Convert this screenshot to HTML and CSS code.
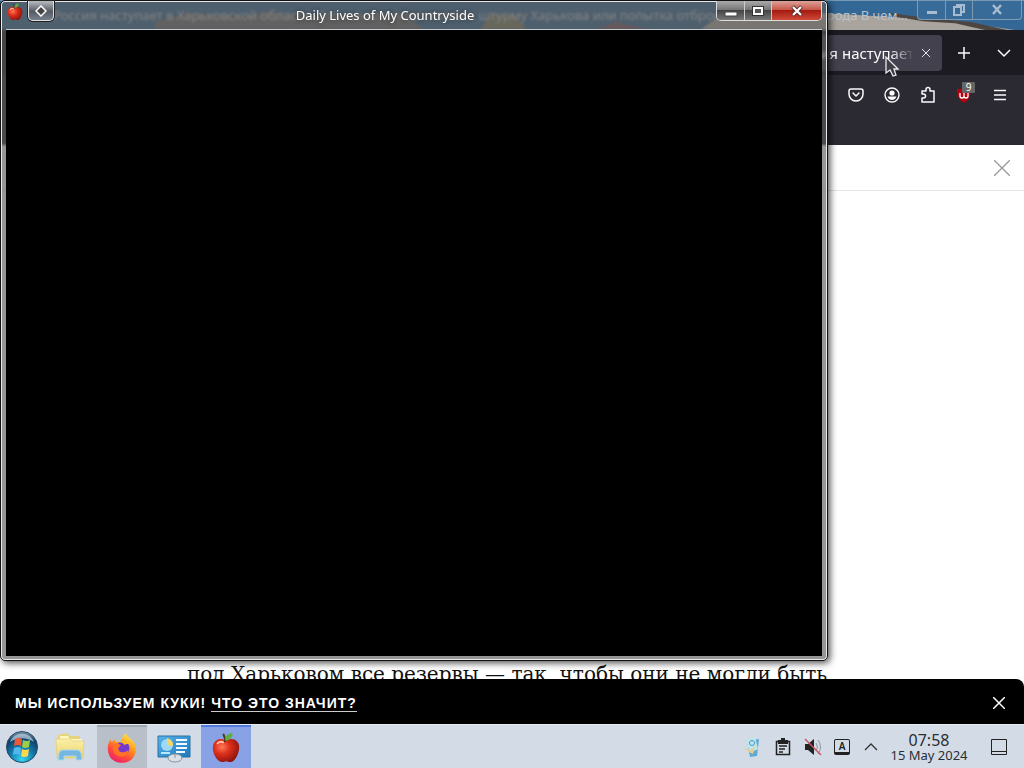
FILE: index.html
```html
<!DOCTYPE html>
<html lang="ru">
<head>
<meta charset="utf-8">
<title>Desktop</title>
<link rel="stylesheet" href="styles.css">
</head>
<body>
<svg class="defs" aria-hidden="true">
  <defs>
    <radialGradient id="redApple" cx=".35" cy=".35" r=".75"><stop offset="0" stop-color="#ff7a55"/><stop offset=".4" stop-color="#dc2f1c"/><stop offset="1" stop-color="#84100b"/></radialGradient>
    <radialGradient id="orb" cx=".5" cy=".9" r=".9"><stop offset="0" stop-color="#35d5f0"/><stop offset=".45" stop-color="#1179ab"/><stop offset=".8" stop-color="#0e3d63"/><stop offset="1" stop-color="#8aa4b8"/></radialGradient>
    <linearGradient id="fox" x1=".8" y1="0" x2=".25" y2="1"><stop offset="0" stop-color="#fff04a"/><stop offset=".4" stop-color="#ff9a1f"/><stop offset=".7" stop-color="#ff4a3c"/><stop offset="1" stop-color="#e91f70"/></linearGradient>
    <linearGradient id="folder" x1="0" y1="0" x2="0" y2="1"><stop offset="0" stop-color="#fbf0a8"/><stop offset="1" stop-color="#ecd36c"/></linearGradient>
    <linearGradient id="panel" x1="0" y1="0" x2="1" y2="1"><stop offset="0" stop-color="#58b4e8"/><stop offset="1" stop-color="#1d79bd"/></linearGradient>
    <symbol id="apple" viewBox="0 0 32 34">
      <path d="M15 9C9 5 2 9 2 17c0 8 6 15 10 15 2 0 3-1 4-1s3 1 5 1c4 0 9-8 9-16 0-7-7-11-15-7z" fill="url(#redApple)"/>
      <path d="M15 11c0-4 0-6-2-9" stroke="#4d3b1c" stroke-width="2" fill="none"/>
      <path d="M15 9c0-5 3-8 8-8 0 5-3 8-8 8z" fill="#5fae45"/>
      <path d="M7 12c2-2 4-2 6-1" stroke="#ffc0a6" stroke-width="2" fill="none" stroke-linecap="round"/>
    </symbol>
  </defs>
</svg>
<div class="desktop">
  <main class="workspace">
    <section class="browser">
      <header class="caption">
        <svg class="caption-art" viewBox="0 0 1024 30" preserveAspectRatio="none" aria-hidden="true">
          <path d="M155 30v-8l30-9 60 3 20-5 50 4 90-1 20 16z" fill="#8c705a" opacity=".6"/>
          <path d="M480 30l10-16 25 1 12 15z" fill="#a58a45" opacity=".6"/>
          <path d="M595 30l20-8 35 8z" fill="#a74a42" opacity=".6"/>
          <path d="M700 30l20-15 110-2 70 4 60 5 55 8z" fill="#a9a49d"/>
          <path d="M888 12l20 3 34 4 30 3 35 8h-22l-30-7-32-2-28-5z" fill="#4c4541"/>
        </svg>
        <span class="caption-text">Россия наступает в Харьковской области. Это начало подготовки к штурму Харькова или попытка отбросить дальше от города В чем...</span>
        <div class="back-controls">
          <button aria-label="Minimize browser"><svg width="14" height="14" viewBox="0 0 14 14"><path d="M2 8h10v3H2z" fill="#a6bdd1"/></svg></button>
          <button aria-label="Restore browser"><svg width="14" height="14" viewBox="0 0 14 14" fill="none" stroke="#a6bdd1" stroke-width="2"><path d="M5 4V2h7v7h-2M2 4h7v8H2z"/></svg></button>
          <button class="wide" aria-label="Close browser"><svg width="14" height="14" viewBox="0 0 14 14" stroke="#a6bdd1" stroke-width="2.500"><path d="M3 2l8 9M11 2l-8 9"/></svg></button>
        </div>
      </header>
      <nav class="tabs">
        <div class="tab">
          <span class="tab-title">Россия наступает</span>
          <button aria-label="Close tab"><svg width="10" height="10" viewBox="0 0 10 10" stroke="#e4e3ea"><path d="M1 1l8 8M9 1l-8 8"/></svg></button>
        </div>
        <button class="new-tab" aria-label="New tab"><svg width="14" height="14" viewBox="0 0 14 14" stroke="#fbfbfe" stroke-width="1.5"><path d="M7 1v12M1 7h12"/></svg></button>
        <button class="all-tabs" aria-label="List all tabs"><svg width="14" height="10" viewBox="0 0 14 10" stroke="#fbfbfe" stroke-width="1.5" fill="none"><path d="M1 2l6 6 6-6"/></svg></button>
      </nav>
      <div class="toolbar">
        <button aria-label="Pocket"><svg width="16" height="16" viewBox="0 0 16 16" fill="none" stroke="#fbfbfe" stroke-width="1.5" stroke-linecap="round" stroke-linejoin="round"><path d="M3 2h10q2 0 2 2v3c0 4-3 7-7 7S1 11 1 7V4q0-2 2-2zM5 6l3 3 3-3"/></svg></button>
        <button aria-label="Account"><svg width="16" height="16" viewBox="0 0 16 16"><circle cx="8" cy="8" r="7" fill="none" stroke="#fbfbfe" stroke-width="1.4"/><circle cx="8" cy="6" r="2.6" fill="#fbfbfe"/><path d="M3.500 9.500h9c-.6 2.200-2.400 3.500-4.500 3.500s-3.900-1.300-4.500-3.500z" fill="#fbfbfe"/></svg></button>
        <button aria-label="Extensions"><svg width="16" height="18" viewBox="0 0 16 18" fill="none" stroke="#fbfbfe" stroke-width="1.5" stroke-linejoin="round"><path d="M6 5V3.500a2 2 0 0 1 4 0V5h4v11H2v-4h1.500a2 2 0 0 0 0-4H2V5z"/></svg></button>
        <button class="blocker" aria-label="Content blocker"><svg width="16" height="16" viewBox="0 0 16 16"><path d="M8 0c2 2 4 2 7 2 0 7-2 11-7 14C3 13 1 9 1 2c3 0 5 0 7-2z" fill="#b5000f"/><path d="M4 6v3q0 2 2 2t2-2V6m0 3q0 2 2 2t2-2V6" stroke="#fff" stroke-width="1.300" fill="none"/></svg><span class="badge">9</span></button>
        <button aria-label="Menu"><svg width="14" height="14" viewBox="0 0 14 14" stroke="#fbfbfe" stroke-width="1.4"><path d="M1 2.500h12M1 7h12M1 11.500h12"/></svg></button>
      </div>
      <div class="page">
        <div class="page-bar"><button aria-label="Закрыть"><svg width="16" height="16" viewBox="0 0 16 16" stroke="#999" stroke-width="1.300"><path d="M0 0l16 16M16 0L0 16"/></svg></button></div>
        <article class="article"><p>под Харьковом все резервы — так, чтобы они не могли быть</p></article>
        <aside class="cookies">
          <p>МЫ ИСПОЛЬЗУЕМ КУКИ! <a href="#cookies">ЧТО ЭТО ЗНАЧИТ?</a></p>
          <button aria-label="Принять"><svg width="12" height="12" viewBox="0 0 12 12" stroke="#fff" stroke-width="1.5"><path d="M0 0l12 12M12 0L0 12"/></svg></button>
        </aside>
      </div>
    </section>
    <section class="game">
      <header class="game-caption">
        <svg class="game-icon" width="18" height="18" aria-hidden="true"><use href="#apple"/></svg>
        <button class="pin" aria-label="Window options"><svg width="12" height="12" viewBox="0 0 12 12"><path d="M6 1l5 5-5 5-5-5z" fill="#444" stroke="#fff" stroke-width="1.5"/></svg></button>
        <h1>Daily Lives of My Countryside</h1>
        <div class="controls">
          <button aria-label="Minimize"><svg width="14" height="12" viewBox="0 0 14 12"><path d="M1 7h12v4H1z" fill="#fff" stroke="#444"/></svg></button>
          <button aria-label="Maximize"><svg width="12" height="10" viewBox="0 0 12 10"><path d="M2 2h8v6H2z" fill="none" stroke="#333" stroke-width="4"/><path d="M2 2h8v6H2z" fill="#555" stroke="#fff" stroke-width="2"/></svg></button>
          <button class="close" aria-label="Close"><svg width="12" height="12" viewBox="0 0 12 12"><path d="M3 3l6 6M9 3L3 9" stroke="#583030" stroke-width="4" stroke-linecap="square"/><path d="M2 2l8 8M10 2l-8 8" stroke="#fff" stroke-width="2.200"/></svg></button>
        </div>
      </header>
      <div class="game-view"></div>
    </section>
    <svg class="pointer" width="14" height="22" viewBox="0 0 14 22" aria-hidden="true"><path d="M1 1v16l4-3 3 6 3-1-2-6h4z" fill="#403f49" stroke="#e8e8ec" stroke-width="1.300"/></svg>
  </main>
  <footer class="taskbar">
    <button class="task start" aria-label="Start"><svg width="34" height="34" viewBox="0 0 34 34"><circle cx="17" cy="17" r="15.500" fill="url(#orb)" stroke="#264864"/><path d="M5 12C9 1 25 1 29 12 21 7 13 7 5 12z" fill="#d5e5ef" opacity=".65"/><path d="M10 9q4-2 7 0l-1 7q-3-2-7 0z" fill="#ee5835"/><path d="M18 10q4 2 7 0l-1 7q-4 2-7 0z" fill="#9bce48"/><path d="M9 18q4-2 7 0l-1 7q-4-2-7 0z" fill="#56b7ed"/><path d="M17 19q3 2 7 0l-1 7q-4 2-7 0z" fill="#ffd64c"/></svg></button>
    <button class="task" aria-label="Files"><svg width="32" height="32" viewBox="0 0 32 32"><path d="M4 4l9-2 3 3h10v7H4z" fill="#e6d37d"/><path d="M6 5h8l2 3h12v6H6z" fill="#fff6be"/><path d="M2 8h14l2 2h12l-1 17H3z" fill="url(#folder)" stroke="#dcc772" stroke-width=".6"/><path d="M4 29l1-7q1-3 4-3h14q3 0 4 3l1 7h-6v-4H10v4z" fill="#75b7df" stroke="#a9d8f0"/></svg></button>
    <button class="task firefox" aria-label="Firefox"><svg width="32" height="32" viewBox="0 0 34 34"><path d="M21 1c1 4 5 5 8 9 5 7 3 16-3 20-7 5-18 3-22-4C1 20 1 13 5 8l1 3 3-3 1 3c2-1 4-1 6 0 1-5 2-7 5-10z" fill="url(#fox)"/><circle cx="18" cy="17" r="7" fill="#7438cf"/><path d="M8 14c2-2 5-2 8 0l-3 3c0 5 6 6 11 2-1 5-5 8-9 7-6-1-9-7-7-12z" fill="#ff7227"/><path d="M14 11c4-3 9-2 12 3-3-2-5-1-6 0-2-2-3-3-6-3z" fill="#ffb423"/></svg></button>
    <button class="task" aria-label="Control panel"><svg width="34" height="32" viewBox="0 0 34 32"><path d="M1 5h32v21H1z" fill="url(#panel)" stroke="#2870a4"/><circle cx="10" cy="14" r="6" fill="#9edaf8"/><path d="M10 14V7a7 7 0 0 1 6 8z" fill="#f2d66a"/><path d="M19 9h11M19 13h11M19 17h11M19 21h9" stroke="#f1fbff" stroke-width="2"/><path d="M4 22h9" stroke="#b7e8ff" stroke-width="2"/><ellipse cx="18" cy="27" rx="7" ry="4" fill="#dbe0e4" stroke="#8a969f"/><path d="M18 23v4" stroke="#8a969f"/></svg></button>
    <button class="task active" aria-label="Daily Lives of My Countryside"><svg width="32" height="32"><use href="#apple"/></svg></button>
    <div class="tray">
      <button aria-label="Recycle bin"><svg width="20" height="22" viewBox="0 0 20 22"><path d="M5 5l12-2-2 17-7 1z" fill="#5fa9d2"/><path d="M4 4l9-3 3 12-8 4z" fill="#bfe5ef"/><circle cx="10" cy="7" r="2.500" fill="none" stroke="#499cbf"/><path d="M1 12l8 2 4-4-2 8z" fill="#e8ce88"/></svg></button>
      <button aria-label="Clipboard"><svg width="16" height="18" viewBox="0 0 16 18"><path d="M1.500 3.500h13v13h-13z" fill="none" stroke="#222" stroke-width="1.500"/><path d="M3 2h3V0h4v2h3v4H3z" fill="#222"/><path d="M4 8h8M4 11h6M4 14h4" stroke="#222" stroke-width="1.300"/></svg></button>
      <button aria-label="Muted"><svg width="18" height="18" viewBox="0 0 18 18"><path d="M1 6h3l6-5v16l-6-5H1z" fill="#222"/><path d="M12 5q3 4 0 8M14 2q5 7 0 14" stroke="#8b9298" fill="none"/><path d="M1 1l16 16" stroke="#c85363" stroke-width="1.500"/></svg></button>
      <button class="layout" aria-label="Keyboard layout"><span>A</span></button>
      <button aria-label="Show hidden icons"><svg width="14" height="8" viewBox="0 0 14 8"><path d="M1 7l6-6 6 6" fill="none" stroke="#333" stroke-width="1.300"/></svg></button>
    </div>
    <div class="clock"><time>07:58</time><span>15 May 2024</span></div>
    <button class="show-desktop" aria-label="Show desktop"><svg width="16" height="16" viewBox="0 0 16 16"><path d="M.5.5h15v15H.5zM1 12.500h14" fill="none" stroke="#222"/></svg></button>
  </footer>
</div>
</body>
</html>
```
FILE: styles.css
```css
* { box-sizing: border-box; }
body { margin: 0; font-family: "Noto Sans", sans-serif; }
button { display: flex; align-items: center; justify-content: center; margin: 0; padding: 0; border: 0; background: none; color: inherit; font: inherit; }
.defs { position: absolute; width: 0; height: 0; }
.desktop { display: flex; flex-direction: column; height: 100vh; overflow: hidden; }
.workspace { position: relative; flex: 1; min-height: 0; }
.browser { display: flex; flex-direction: column; height: 100%; }

.caption { position: relative; display: flex; align-items: flex-start; height: 30px; padding-left: 53px; background: #336795; border-top: 1px solid #7799b4; overflow: hidden; }
.caption-art { position: absolute; inset: 0; width: 100%; height: 100%; }
.caption-text { position: relative; flex: 1; min-width: 0; overflow: hidden; white-space: nowrap; font-size: 13px; line-height: 28px; color: #bcc2c8; }
.back-controls { position: relative; display: flex; height: 19px; margin-right: 2px; border: 1px solid #7d9bb3; border-top: 0; border-radius: 0 0 4px 4px; background: #386b98; }
.back-controls button { width: 27px; }
.back-controls button + button { border-left: 1px solid #7d9bb3; }
.back-controls .wide { width: 49px; }

.tabs { display: flex; align-items: center; justify-content: flex-end; height: 45px; padding-right: 2px; background: #1c1b22; }
.tab { display: flex; align-items: center; width: 230px; height: 36px; padding: 0 8px; border-radius: 4px; background: #42414d; color: #fbfbfe; }
.tab-title { flex: 1; overflow: hidden; text-align: right; white-space: nowrap; font-size: 15px; -webkit-mask-image: linear-gradient(to left, transparent, #000 24px); mask-image: linear-gradient(to left, transparent, #000 24px); }
.tab button { width: 16px; height: 24px; margin-left: 4px; }
.new-tab { width: 43px; height: 36px; }
.all-tabs { width: 37px; height: 36px; }

.toolbar { display: flex; justify-content: flex-end; height: 70px; padding: 2px 6px 0 0; background: #2b2a33; }
.toolbar button { position: relative; width: 36px; height: 36px; }
.badge { position: absolute; top: 5px; right: 7px; width: 13px; border-radius: 1px; background: #666; color: #fff; font-size: 10px; line-height: 11px; }

.page { display: flex; flex: 1; flex-direction: column; min-height: 0; background: #fff; }
.page-bar { display: flex; align-items: center; justify-content: flex-end; height: 46px; padding-right: 14px; border-bottom: 1px solid #e5e5e5; }
.article { display: flex; flex: 1; flex-direction: column; justify-content: flex-end; width: 650px; min-height: 0; margin: 0 auto; overflow: hidden; }
.article p { height: 17px; margin: 0; overflow: visible; font: 20px/24px "DejaVu Serif", serif; color: #111; white-space: nowrap; }
.cookies { display: flex; position: relative; align-items: center; justify-content: space-between; height: 45px; padding: 2px 19px 0 15px; border-radius: 8px 8px 0 0; background: #000; color: #fff; }
.cookies p { margin: 0; font: bold 14px/20px "Liberation Sans", sans-serif; letter-spacing: 1px; }
.cookies a { color: inherit; border-bottom: 1px solid #ccc; text-decoration: none; }

.game { position: absolute; inset: 0 196px 63px 0; display: flex; flex-direction: column; padding: 0 5px 4px; border: 1px solid #111; border-radius: 5px; background: rgba(94, 90, 88, .64); -webkit-backdrop-filter: blur(1px); backdrop-filter: blur(1px); box-shadow: inset 0 0 0 1px #e8eaec, 2px 2px 7px rgba(0, 0, 0, .7); }
.game-caption { position: relative; display: flex; align-items: flex-start; height: 29px; border-bottom: 1px solid #c9cfd4; }
.game-icon { margin-top: 2px; }
.pin { width: 26px; height: 20px; margin-left: 4px; border: 1px solid #ddd; border-top: 0; border-radius: 0 0 5px 5px; background: linear-gradient(#b8bcc1, #555b66 55%, #777f8d); box-shadow: 0 0 0 1px #222; }
.game h1 { flex: 1; margin: 0; color: #fff; font-size: 13px; font-weight: 400; line-height: 28px; text-align: center; text-shadow: 0 0 4px #222; }
.controls { display: flex; height: 20px; border: 1px solid #ddd; border-top: 0; border-radius: 0 0 5px 5px; overflow: hidden; }
.controls button { width: 27px; background: linear-gradient(#aaa, #777 45%, #454545 50%, #777); }
.controls button + button { border-left: 1px solid #ccc; }
.controls .close { width: 50px; background: linear-gradient(#dda29a, #c75a4b 45%, #a51b12 50%, #cf4938); }
.game-view { flex: 1; background: #000; }
.pointer { position: absolute; top: 56px; right: 125px; }

.taskbar { display: flex; align-items: center; height: 44px; background: #d3dce6; border-top: 1px solid #e6ebf1; }
.task { width: 50px; height: 44px; margin-right: 2px; }
.start { width: 43px; }
.firefox { background: #b8bfc8; border-top: 2px solid #a1a8b2; }
.active { background: #88a2e5; border-top: 2px solid #567be0; }
.tray { display: flex; align-items: center; gap: 12px; margin-left: auto; color: #222; }
.tray button { min-width: 18px; height: 24px; }
.tray .layout { width: 16px; min-width: 16px; height: 16px; border: 1px solid #222; border-bottom-width: 3px; border-radius: 2px; font-size: 10px; font-weight: 600; }
.clock { display: flex; flex-direction: column; align-items: center; width: 90px; margin-left: 4px; color: #292e34; }
.clock time { font-size: 16px; line-height: 16px; }
.clock span { font-size: 13px; line-height: 14px; white-space: nowrap; }
.show-desktop { width: 50px; height: 44px; }
```
